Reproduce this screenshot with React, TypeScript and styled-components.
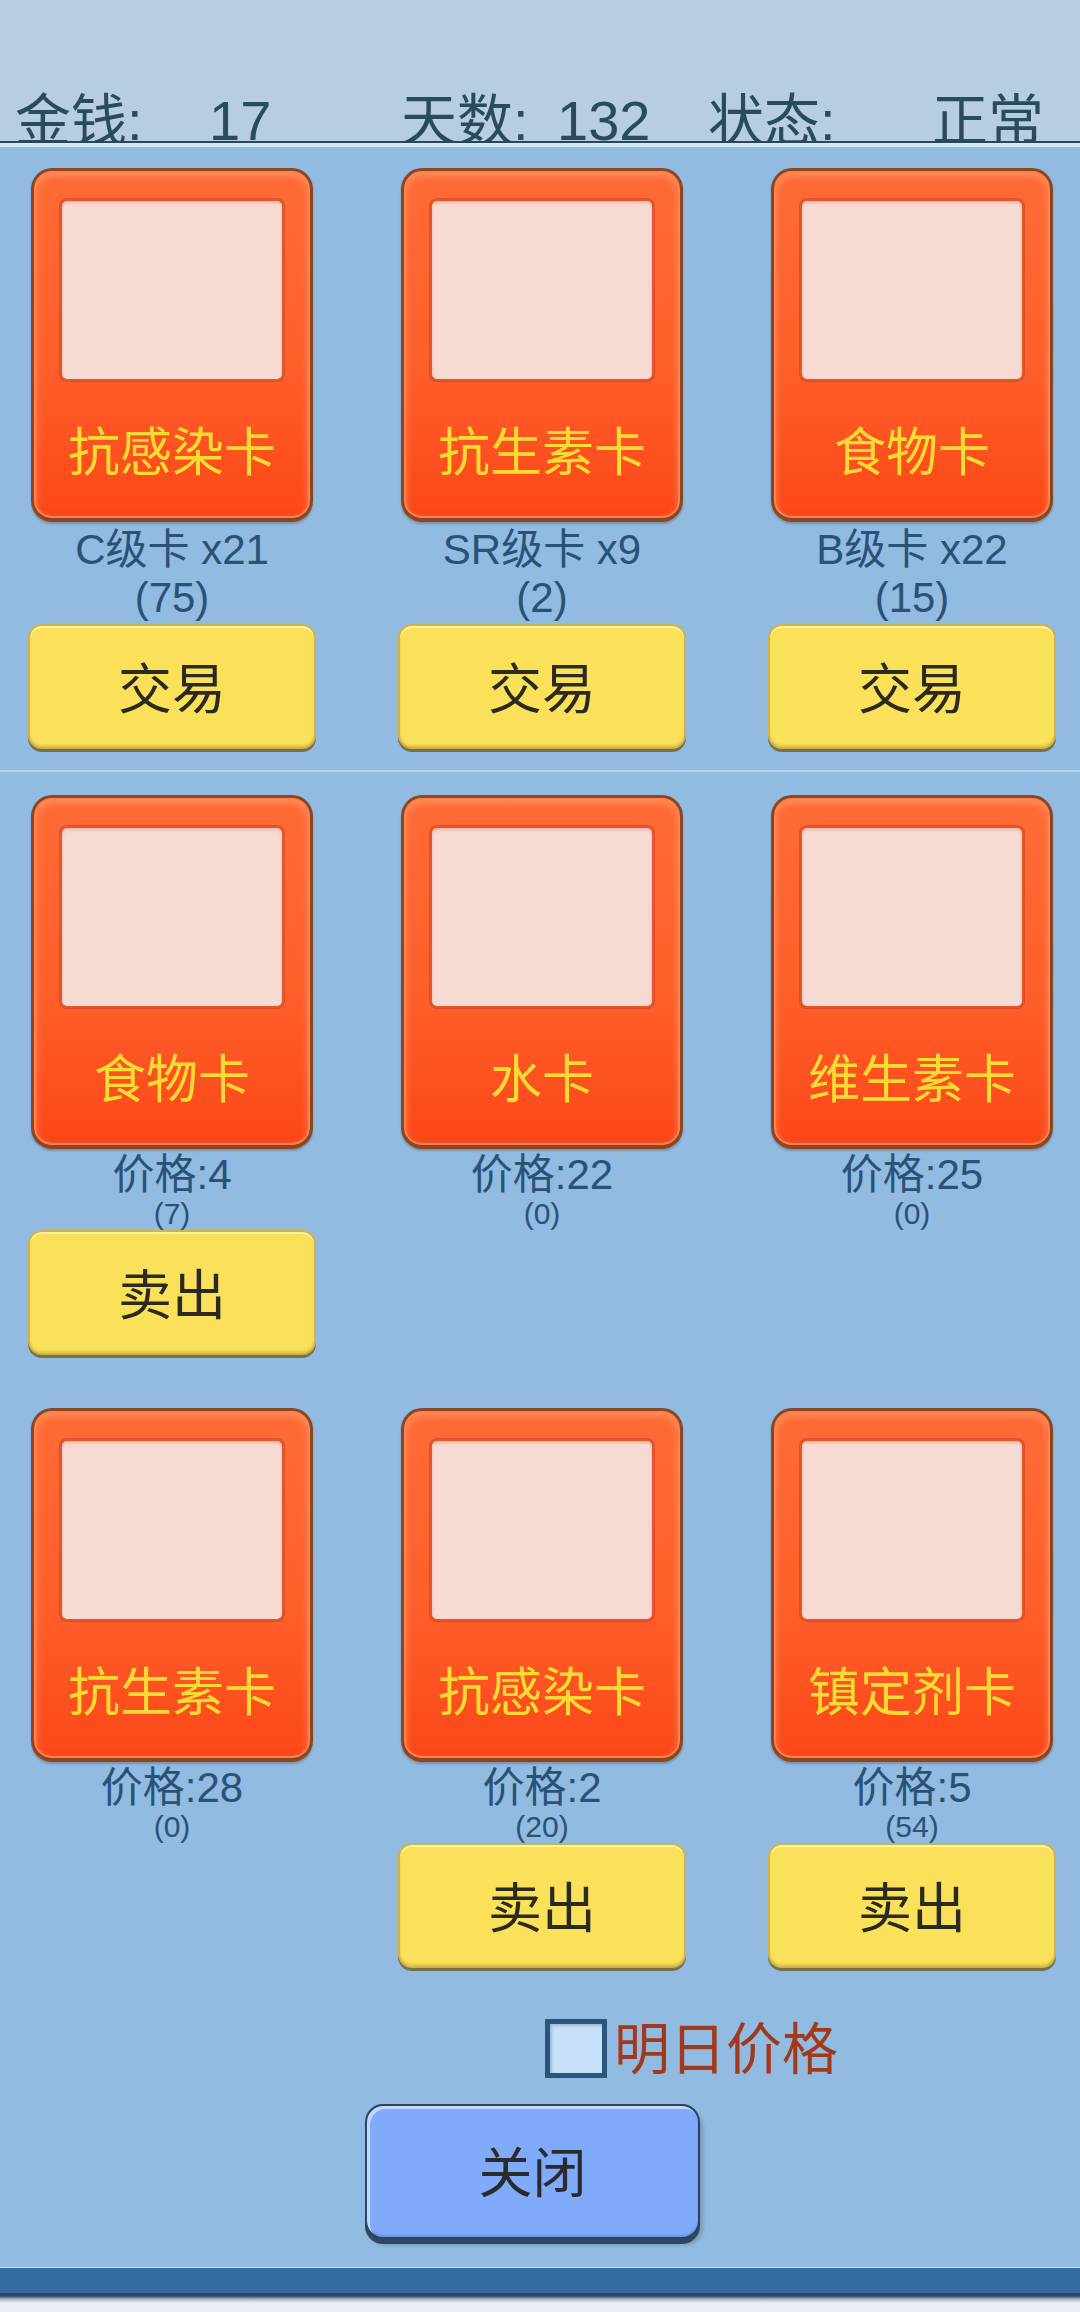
import React from 'react';
import styled, { createGlobalStyle } from 'styled-components';

const GlobalStyle = createGlobalStyle`
  html, body {
    margin: 0;
    padding: 0;
    background: #91bbe0;
  }
  * {
    box-sizing: border-box;
  }
`;

const FONT = `"Liberation Sans", "Noto Sans CJK SC", sans-serif`;

const Page = styled('div')`
  width: 1080px;
  height: 2312px;
  overflow: hidden;
  display: flex;
  flex-direction: column;
  background: #91bbe0;
  font-family: ${FONT};
`;

// status bar: the text is cut by the rule underneath, as in the game
const Header = styled('div')`
  height: 141px;
  overflow: hidden;
  background: #b7cde2;
  padding: 93px 0 0 15px;
  display: grid;
  grid-template-columns: 194px 192px 156px 151px 224px auto;
  align-items: start;
  font-size: 56px;
  line-height: 56px;
  color: #294b60;
  white-space: nowrap;
`;

const HeaderRule = styled('div')`
  height: 6px;
  border-top: 2px solid #2a4659;
  background: #d6e7f6;
`;

const Grid = styled('div')<{ $top: number; $rowGap?: number }>`
  display: grid;
  grid-template-columns: repeat(3, 288px);
  column-gap: 82px;
  row-gap: ${(p) => p.$rowGap ?? 0}px;
  padding: ${(p) => p.$top}px 0 0 28px;
  align-items: start;
`;

const Column = styled('div')`
  display: flex;
  flex-direction: column;
  align-items: center;
`;

const Card = styled('div')`
  width: 282px;
  height: 354px;
  border: 3px solid #8a4722;
  border-bottom-width: 4px;
  border-radius: 21px;
  background: linear-gradient(#ff6b35 0%, #ff5f2b 55%, #fc4718 100%);
  box-shadow:
    inset 0 0 0 2px #ff8150,
    inset 0 3px 6px 3px rgba(255, 170, 120, 0.5),
    inset 0 -3px 5px rgba(200, 40, 0, 0.25),
    0 2px 2px rgba(60, 30, 10, 0.25);
  padding-top: 28px;
  display: flex;
  flex-direction: column;
  align-items: center;
`;

const Artwork = styled('div')`
  width: 224px;
  height: 182px;
  border: 2px solid #e4562d;
  border-radius: 7px;
  background: #f7dad2;
  box-shadow:
    0 0 0 1px rgba(150, 50, 20, 0.35),
    inset 0 2px 3px rgba(200, 80, 50, 0.25);
`;

const CardName = styled('div')`
  margin-top: 46px;
  font-size: 52px;
  line-height: 52px;
  color: #f8dc34;
  white-space: nowrap;
`;

const Caption = styled('div')<{ $size: number; $height: number; $gap?: number }>`
  margin-top: ${(p) => p.$gap ?? 0}px;
  font-size: ${(p) => p.$size}px;
  line-height: ${(p) => p.$height}px;
  height: ${(p) => p.$height}px;
  color: #2a5276;
  white-space: pre;
`;

const ActionButton = styled('button')<{ $gap?: number }>`
  margin-top: ${(p) => p.$gap ?? 2}px;
  width: 288px;
  height: 125px;
  padding: 6px 0 0;
  border: 2px solid #cdb54a;
  border-radius: 14px;
  background: #fbe05a;
  box-shadow:
    inset 0 2px 0 #fff3a6,
    inset 0 -2px 2px rgba(160, 130, 30, 0.25),
    0 3px 0 #77704a;
  font-family: ${FONT};
  font-size: 54px;
  line-height: 54px;
  color: #2b2a1f;
  cursor: pointer;
`;

const Divider = styled('div')`
  margin-top: 21px;
  height: 2px;
  background: #b8d2ea;
`;

const CheckRow = styled('label')`
  margin-top: 51px;
  padding-left: 545px;
  display: flex;
  align-items: center;
  gap: 7px;
  cursor: pointer;
`;

const CheckBox = styled('span')`
  width: 62px;
  height: 59px;
  border: 5px solid #2d5479;
  background: #c7e1fa;
  box-shadow: inset 2px 2px 3px rgba(40, 70, 110, 0.25);
`;

const CheckLabel = styled('span')`
  padding-top: 3px;
  font-size: 56px;
  line-height: 56px;
  color: #a3391c;
`;

const CloseRow = styled('div')`
  margin-top: 26px;
  padding-left: 365px;
  display: flex;
`;

const CloseButton = styled('button')`
  width: 335px;
  height: 135px;
  padding: 4px 0 0;
  border: 2px solid #2b4561;
  border-radius: 18px;
  background: #80aafa;
  box-shadow:
    inset 3px 3px 0 #c2d9ff,
    inset 0 -2px 2px rgba(40, 60, 120, 0.2),
    0 5px 0 #2e4862,
    3px 6px 4px rgba(0, 0, 0, 0.18);
  font-family: ${FONT};
  font-size: 54px;
  line-height: 54px;
  color: #2b2b2e;
  cursor: pointer;
`;

const Footer = styled('div')`
  margin-top: 28px;
  height: 26px;
  border-top: 1px solid #c8e0f5;
  background: #336aa0;
`;

const FooterShade = styled('div')`
  flex: 1;
  background: linear-gradient(#2a4660 0px, #2d4a66 3px, #a6b3bf 6px, #e8eef3 10px);
`;

type TradeCard = { name: string; grade: string; count: number };
type SellCard = { name: string; price: number; stock: number; canSell: boolean };

const tradeCards: TradeCard[] = [
  { name: '抗感染卡', grade: 'C级卡 x21', count: 75 },
  { name: '抗生素卡', grade: 'SR级卡 x9', count: 2 },
  { name: '食物卡', grade: 'B级卡 x22', count: 15 },
];

const sellCards: SellCard[] = [
  { name: '食物卡', price: 4, stock: 7, canSell: true },
  { name: '水卡', price: 22, stock: 0, canSell: false },
  { name: '维生素卡', price: 25, stock: 0, canSell: false },
  { name: '抗生素卡', price: 28, stock: 0, canSell: false },
  { name: '抗感染卡', price: 2, stock: 20, canSell: true },
  { name: '镇定剂卡', price: 5, stock: 54, canSell: true },
];

const ItemCard: React.FC<{ name: string }> = ({ name }) => (
  <Card>
    <Artwork />
    <CardName>{name}</CardName>
  </Card>
);

const App: React.FC = () => {
  return (
    <>
      <GlobalStyle />
      <Page>
        <Header>
          <span>金钱:</span>
          <span>17</span>
          <span>天数:</span>
          <span>132</span>
          <span>状态:</span>
          <span>正常</span>
        </Header>
        <HeaderRule />

        <Grid $top={21}>
          {tradeCards.map((c) => (
            <Column key={c.name}>
              <ItemCard name={c.name} />
              <Caption $size={42} $height={48} $gap={4}>{c.grade}</Caption>
              <Caption $size={42} $height={48}>({c.count})</Caption>
              <ActionButton>交易</ActionButton>
            </Column>
          ))}
        </Grid>

        <Divider />

        <Grid $top={23} $rowGap={53}>
          {sellCards.map((c, i) => (
            <Column key={i}>
              <ItemCard name={c.name} />
              <Caption $size={42} $height={44} $gap={4}>价格:{c.price}</Caption>
              <Caption $size={30} $height={34}>({c.stock})</Caption>
              {c.canSell && <ActionButton $gap={-1}>卖出</ActionButton>}
            </Column>
          ))}
        </Grid>

        <CheckRow>
          <CheckBox />
          <CheckLabel>明日价格</CheckLabel>
        </CheckRow>

        <CloseRow>
          <CloseButton>关闭</CloseButton>
        </CloseRow>

        <Footer />
        <FooterShade />
      </Page>
    </>
  );
};

export default App;
